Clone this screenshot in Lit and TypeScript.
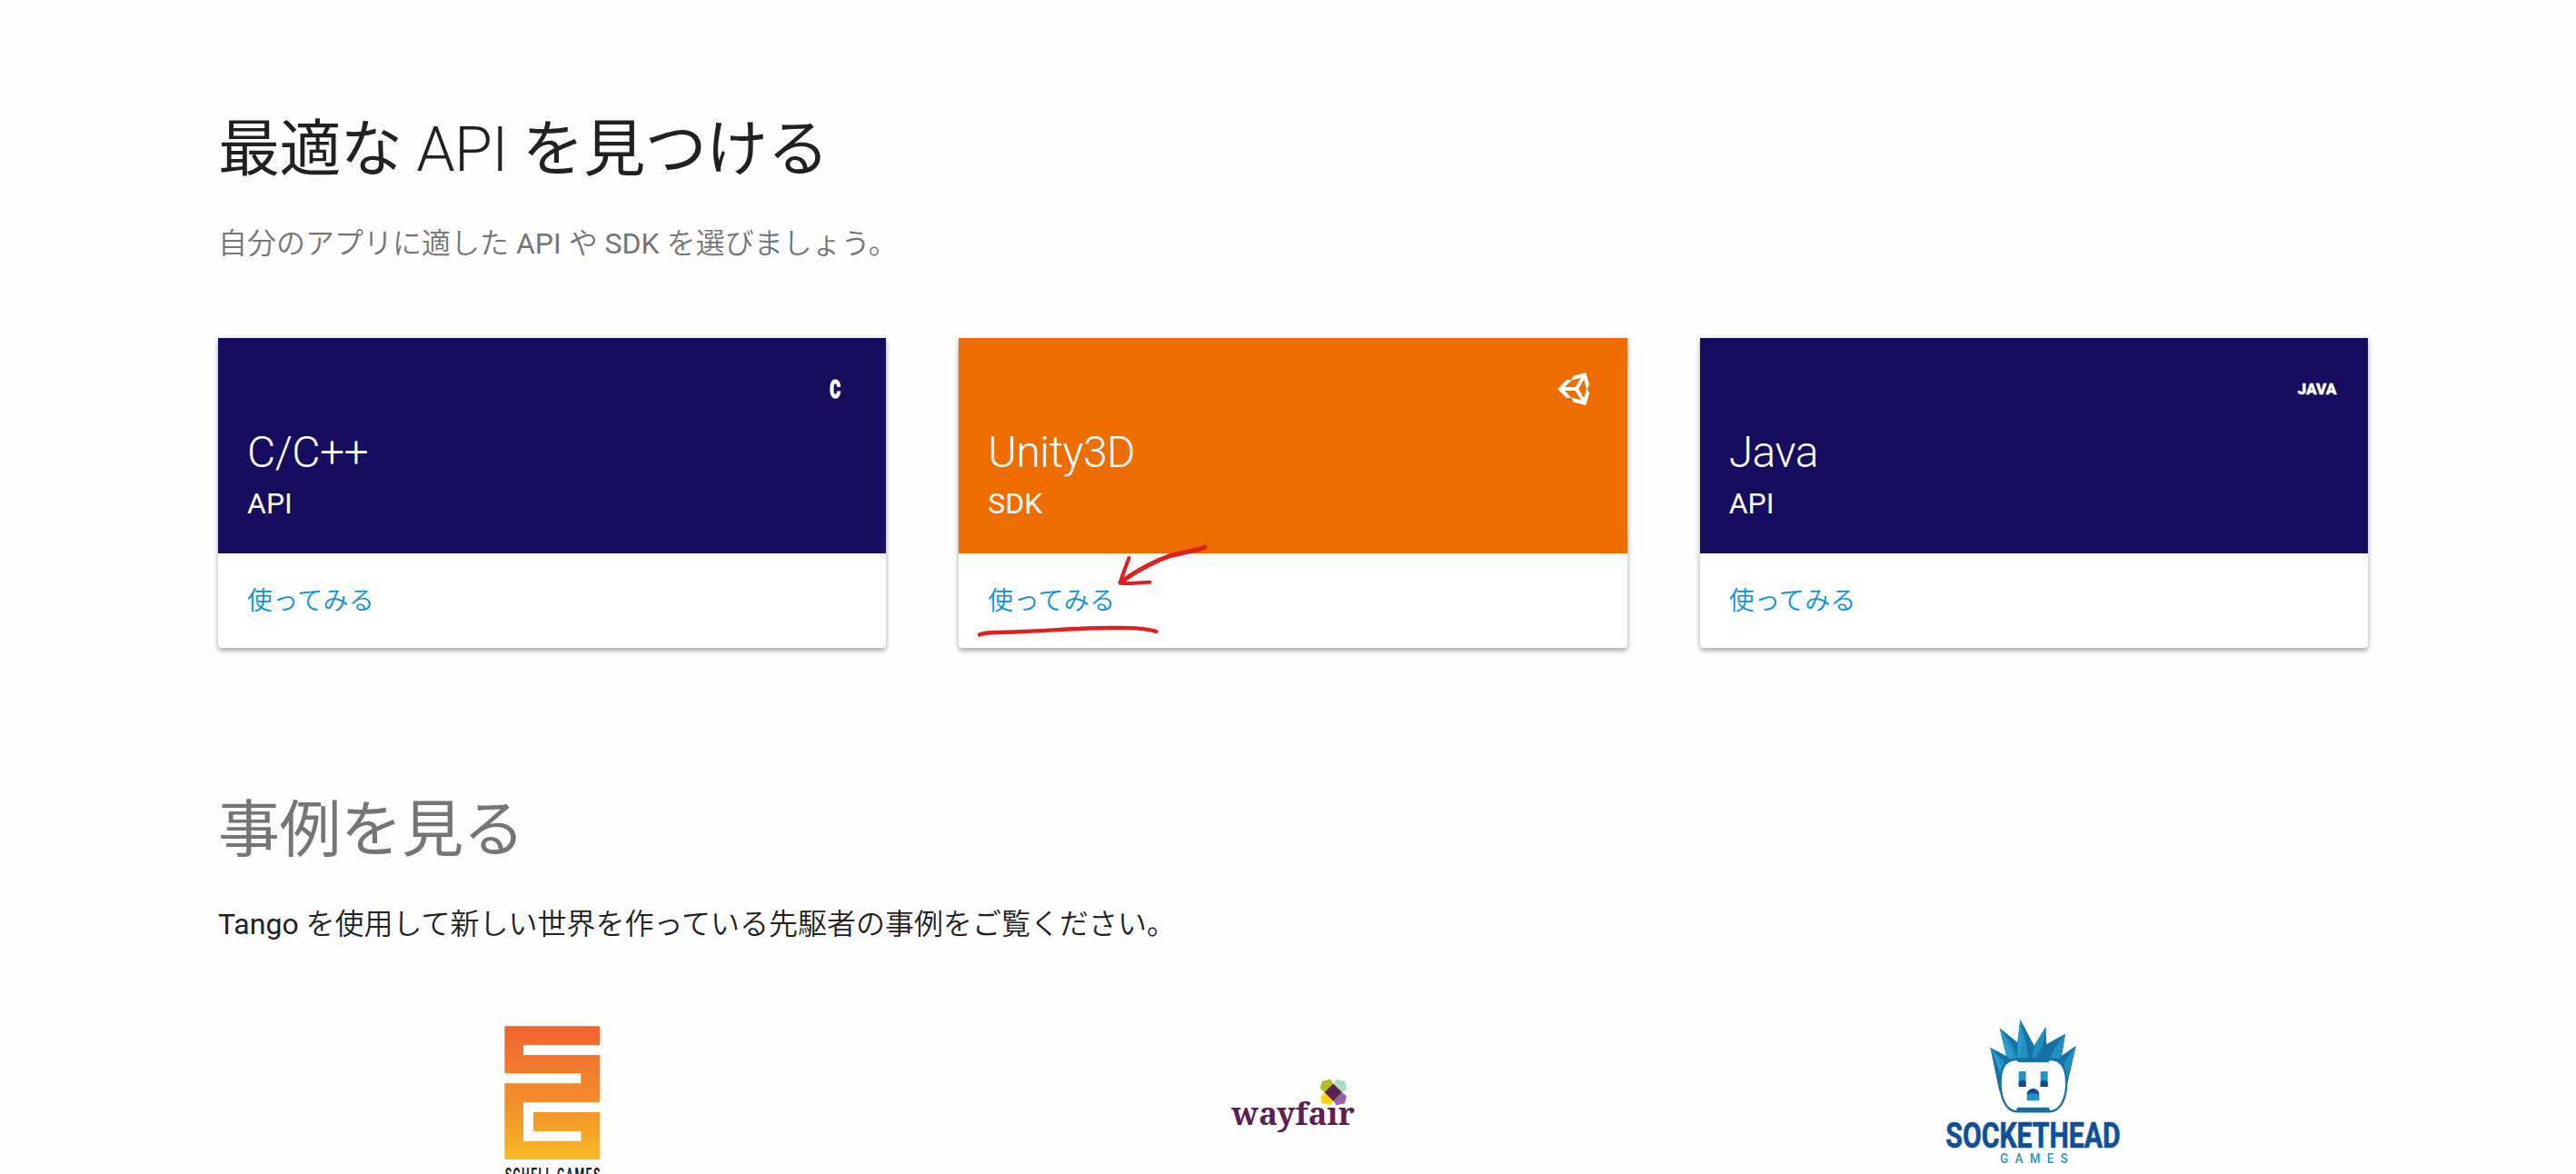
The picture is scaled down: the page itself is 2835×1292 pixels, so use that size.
import { LitElement, html, css, svg } from "lit";
import { customElement, property } from "lit/decorators.js";

type IconName = "c" | "unity" | "java";

const icons = {
  c: svg`<text x="0" y="0" transform="translate(24 33.500) scale(.66 1)" font-size="27" font-weight="900" stroke="currentColor" stroke-width="1.200" text-anchor="middle">C</text>`,
  unity: svg`<path transform="scale(2)" d="M9.11,17H6.5L1.59,12L6.5,7H9.11L10.42,4.74L17.21,3L19.08,9.74L17.77,12L19.08,14.26L17.21,21L10.42,19.26L9.11,17M9.25,16.75L14.38,18.13L11.42,13H5.5L9.25,16.75M16.12,17.13L17.5,12L16.12,6.87L13.15,12L16.12,17.13M9.25,7.25L5.5,11H11.42L14.38,5.87L9.25,7.25Z"/>`,
  java: svg`<text x="2.500" y="30" font-size="17" font-weight="900" stroke="currentColor" stroke-width=".4" textLength="43" lengthAdjust="spacingAndGlyphs">JAVA</text>`,
};

@customElement("api-card")
class ApiCard extends LitElement {
  @property() name = "";
  @property() kind = "";
  @property() icon: IconName = "c";
  @property({ type: Boolean, reflect: true }) highlighted = false;

  static styles = css`
    :host {
      display: block;
      position: relative;
      border-radius: 0 0 4px 4px;
      background: #fff;
      box-shadow: 0 4px 5px rgba(0, 0, 0, 0.22), 0 1px 7px rgba(0, 0, 0, 0.16);
    }
    .head {
      box-sizing: border-box;
      height: 237px;
      padding: 32px 32px 31px;
      display: flex;
      flex-direction: column;
      justify-content: space-between;
      color: #fff;
      background: #160d60;
    }
    :host([highlighted]) .head {
      background: #ef6c00;
    }
    .icon {
      width: 48px;
      height: 48px;
      align-self: flex-end;
      fill: currentColor;
      font-family: Roboto, sans-serif;
    }
    .name {
      font-size: 48px;
      line-height: 64px;
      font-weight: 300;
      letter-spacing: -0.48px;
    }
    .kind {
      font-size: 32px;
      line-height: 48px;
    }
    .foot {
      padding: 33px 32px 31px;
      height: 40px;
      line-height: 40px;
    }
    .link {
      color: #0c93dc;
      font-size: 28px;
      font-weight: 350;
      letter-spacing: 0.3px;
      text-decoration: none;
    }
    .ink {
      position: absolute;
      left: 0;
      top: 210px;
      width: 300px;
      height: 131px;
      fill: none;
      stroke: #e01f1f;
      stroke-linecap: round;
      stroke-linejoin: round;
      pointer-events: none;
    }
  `;

  render() {
    return html`
      <div class="head">
        <svg class="icon" viewBox="0 0 48 48">${icons[this.icon]}</svg>
        <div>
          <div class="name">${this.name}</div>
          <div class="kind">${this.kind}</div>
        </div>
      </div>
      <div class="foot"><a class="link" href="#">使ってみる</a></div>
      ${this.highlighted
        ? html`<svg class="ink" viewBox="0 210 300 131">
            <path stroke-width="5" d="M271 230C260 235 243 236 229 241C211 248 192 259 178 269"/>
            <path stroke-width="4" d="M187.5 242C184 252 180 260 178 269.5C187 271.500 199 268.500 210.500 268.700"/>
            <path stroke-width="4.4" d="M23 326.500C29 323.500 38 324.500 60 323.500C100 322 135 319 166 319C190 318.500 206 319.500 217.500 323"/>
          </svg>`
        : null}
    `;
  }
}

@customElement("schell-logo")
class SchellLogo extends LitElement {
  static styles = css`
    :host, svg { display: block; }
    .word { font-family: Roboto, sans-serif; font-weight: 700; fill: #1d1a1a; }
  `;
  render() {
    return html`<svg width="150" height="182" viewBox="8 0 450 546">
      <defs>
        <linearGradient id="warm" x1="0" y1="58" x2="0" y2="498" gradientUnits="userSpaceOnUse">
          <stop offset="0" stop-color="#f0642f"/>
          <stop offset=".55" stop-color="#f28c2c"/>
          <stop offset="1" stop-color="#f6ba24"/>
        </linearGradient>
      </defs>
      <path fill="url(#warm)" d="M75 58H390V121H137V153H390V309H137V437H327V405H170V342H390V498H75V247H327V214H75Z"/>
      <text class="word" transform="translate(76 569) scale(.62 1)" font-size="59" textLength="507" lengthAdjust="spacing">SCHELL GAMES</text>
    </svg>`;
  }
}

@customElement("wayfair-logo")
class WayfairLogo extends LitElement {
  static styles = css`
    :host, svg { display: block; }
    .word { font-family: "Noto Serif", "DejaVu Serif", serif; font-weight: 700; fill: #5c2050; }
  `;
  render() {
    return html`<svg width="170" height="182" viewBox="-6 -180 510 546">
      <text class="word" x="46" y="205" font-size="104" textLength="407" lengthAdjust="spacingAndGlyphs">wayfair</text>
      <path fill="#fefefe" d="M358 90H408V143H358Z"/>
      <path fill="#b3bd20" d="M345 60L372 53L384 70L354 97L338 84Z"/>
      <path fill="#a9dfbf" d="M392 53L421 60L426 86L411 97L382 70Z"/>
      <path fill="#f7d40c" d="M354 96L383 124L375 138L345 133L341 111Z"/>
      <path fill="#9f5fad" d="M411 96L426 109L420 133L392 139L382 124Z"/>
      <path fill="#5c2050" d="M382 68L411 96L382 125L353 96Z"/>
    </svg>`;
  }
}

@customElement("sockethead-logo")
class SocketheadLogo extends LitElement {
  static styles = css`
    :host, svg { display: block; }
    .word { font-family: Roboto, sans-serif; font-weight: 700; fill: #10509a; stroke: #10509a; stroke-width: 2px; }
    .sub { font-family: Roboto, sans-serif; font-weight: 500; fill: #2195c5; }
  `;
  render() {
    return html`<svg width="230" height="182" viewBox="10 0 690 546">
      <path fill="#166fa5" d="M212 128L265 156L243 64L302 112L311 35L357 122L396 60L397 118L460 83L448 155L495 123L463 265L452 305H256L241 268Z"/>
      <path fill="#208fc4" d="M212 128L250 165L262 185L247 230L238 190ZM243 64L284 118L305 168L275 165L266 156ZM311 35L330 110L338 162H303L302 112ZM396 60L385 125L362 162H350L357 122ZM460 83L425 130L408 165H440L448 155ZM495 123L462 168L455 185L466 230Z"/>
      <path fill="#3ca5d3" opacity=".55" d="M311 35L316 120L308 162H303V112ZM243 64L275 125L290 165H275L266 156ZM212 128L238 165L248 190L243 210Z"/>
      <path fill="#fff" stroke="#166fa5" stroke-width="7" d="M302 168C264 166 248 192 246 236C244 292 262 340 302 340H406C446 340 466 292 463 236C461 192 444 166 408 168Z"/>
      <path fill="#166fa5" d="M298 162H411L405 177H304ZM302 326H405L412 342H295Z"/>
      <path fill="#2195c5" d="M306 207H330V258H306ZM378 207H402V258H378ZM333 290C333 257 374 257 374 290V304H333Z"/>
      <path fill="#124a94" d="M306 258V244C308 234 326 234 330 242V258ZM378 258V242C382 234 400 234 402 244V258ZM333 286C333 257 374 257 374 286C362 277 346 277 333 286Z"/>
      <text class="word" x="65" y="460" font-size="114" textLength="577" lengthAdjust="spacingAndGlyphs">SOCKETHEAD</text>
      <text class="sub" transform="translate(245 511) scale(.85 1)" font-size="46" textLength="262" lengthAdjust="spacing">GAMES</text>
    </svg>`;
  }
}

@customElement("app-root")
class AppRoot extends LitElement {
  static styles = css`
    :host {
      display: block;
      box-sizing: border-box;
      width: 2835px;
      height: 1292px;
      overflow: hidden;
      background: #fefefe;
      color: #212121;
      padding: 125px 229px 0 240px;
      font-family: Roboto, "Noto Sans CJK JP", sans-serif;
    }
    .title {
      margin: 0;
      font-size: 68px;
      line-height: 80px;
      letter-spacing: -0.6px;
      font-weight: 300;
    }
    .lead {
      margin: 31px 0 0;
      font-size: 32px;
      line-height: 64px;
    }
    .ja { font-weight: 350; }
    .title .ja { font-weight: 400; }
    .muted { color: #757575; }
    .row {
      display: grid;
      grid-template-columns: repeat(3, 1fr);
      column-gap: 80px;
    }
    .cards { margin-top: 72px; }
    .stories { padding-top: 161px; }
    .logos {
      margin-top: 61px;
      justify-items: center;
    }
  `;

  render() {
    return html`
      <section>
        <h2 class="title"><span class="ja">最適な</span> API <span class="ja">を見つける</span></h2>
        <p class="lead muted"><span class="ja">自分のアプリに適した</span> API <span class="ja">や</span> SDK <span class="ja">を選びましょう。</span></p>
        <div class="row cards">
          <api-card name="C/C++" kind="API" icon="c"></api-card>
          <api-card name="Unity3D" kind="SDK" icon="unity" highlighted></api-card>
          <api-card name="Java" kind="API" icon="java"></api-card>
        </div>
      </section>
      <section class="stories">
        <h2 class="title muted"><span class="ja">事例を見る</span></h2>
        <p class="lead">Tango <span class="ja">を使用して新しい世界を作っている先駆者の事例をご覧ください。</span></p>
        <div class="row logos">
          <schell-logo></schell-logo>
          <wayfair-logo></wayfair-logo>
          <sockethead-logo></sockethead-logo>
        </div>
      </section>
    `;
  }
}
